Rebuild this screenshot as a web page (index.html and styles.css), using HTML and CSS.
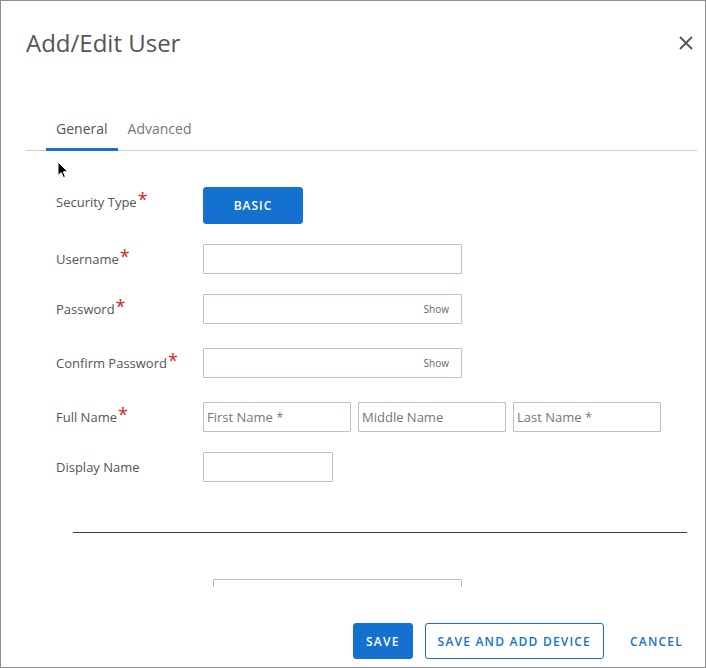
FILE: index.html
```html
<!DOCTYPE html>
<html>
<head>
<meta charset="utf-8">
<link rel="stylesheet" href="styles.css">
</head>
<body>
<div class="dialog">
  <div class="header">
    <h1 class="title">Add/Edit User</h1>
    <button class="close" aria-label="Close">
      <svg width="14" height="14" viewBox="0 0 14 14"><path d="M1 1L13 13M13 1L1 13" stroke="#555" stroke-width="1.8" fill="none"/></svg>
    </button>
  </div>
  <div class="tabs">
    <div class="tab active">General</div>
    <div class="tab">Advanced</div>
  </div>
  <div class="body">
    <div class="row row-security">
      <div class="label">Security Type<span class="req">*</span></div>
      <button class="btn btn-primary btn-basic">BASIC</button>
    </div>
    <div class="row">
      <div class="label">Username<span class="req">*</span></div>
      <input class="input w-full" type="text">
    </div>
    <div class="row">
      <div class="label">Password<span class="req">*</span></div>
      <div class="input w-full pw"><input class="bare" type="password"><span class="show">Show</span></div>
    </div>
    <div class="row row-wide">
      <div class="label">Confirm Password<span class="req">*</span></div>
      <div class="input w-full pw"><input class="bare" type="password"><span class="show">Show</span></div>
    </div>
    <div class="row row-wide">
      <div class="label">Full Name<span class="req">*</span></div>
      <div class="names">
        <input class="input w-name" type="text" placeholder="First Name *">
        <input class="input w-name" type="text" placeholder="Middle Name">
        <input class="input w-name" type="text" placeholder="Last Name *">
      </div>
    </div>
    <div class="row">
      <div class="label">Display Name</div>
      <input class="input w-short" type="text">
    </div>
    <hr class="divider">
    <input class="input w-partial" type="text">
  </div>
  <div class="footer">
    <button class="btn btn-primary">SAVE</button>
    <button class="btn btn-outline">SAVE AND ADD DEVICE</button>
    <button class="btn btn-text">CANCEL</button>
  </div>
  <svg class="cursor" width="12" height="18" viewBox="0 0 12 18"><path d="M1 1L1 14.5L4.2 11.6L6.4 16.6L8.4 15.7L6.3 10.9L10.6 10.6Z" fill="#000" stroke="#fff" stroke-width="1"/></svg>
</div>
</body>
</html>
```
FILE: styles.css
```css
* { box-sizing: border-box; }
html, body { margin: 0; padding: 0; background: #fff; }
body { font-family: "Open Sans", "Noto Sans", sans-serif; color: #555; }

.dialog {
  position: relative;
  width: 706px;
  height: 668px;
  border: 1px solid #8f8f8f;
  display: flex;
  flex-direction: column;
  overflow: hidden;
}

.header {
  display: flex;
  justify-content: space-between;
  align-items: center;
  padding: 25px 12px 0 25px;
}
.title {
  margin: 0;
  font-size: 24px;
  line-height: 33px;
  font-weight: 400;
  color: #555;
}
.close {
  border: 0;
  background: none;
  padding: 0;
  width: 14px;
  height: 14px;
  display: flex;
}

.tabs {
  display: flex;
  margin: 52px 8px 0 25px;
  padding-left: 20px;
  border-bottom: 1px solid #cfcfcf;
}
.tab {
  font-size: 14px;
  line-height: 19px;
  padding: 8px 10px 10px;
  border-bottom: 3px solid transparent;
  margin-bottom: -1px;
  color: #777;
}
.tab.active {
  color: #555;
  border-bottom-color: #1571cf;
}

.body {
  flex: 1;
  overflow: hidden;
  padding: 36px 0 0 55px;
  display: flex;
  flex-direction: column;
  gap: 20px;
}
.row {
  display: flex;
  align-items: center;
}
.row-wide { margin-top: 4px; }
.row-security { align-items: flex-start; }
.row-security .label { padding-top: 6px; }
.label {
  width: 147px;
  flex: none;
  font-size: 13px;
  line-height: 18px;
  color: #555;
}
.req {
  color: #d8231c;
  font-size: 18px;
  line-height: 10px;
  margin-left: 1px;
  position: relative;
  top: -1px;
}

.input {
  height: 30px;
  border: 1px solid #b5c1cc;
  border-radius: 1px;
  font-family: inherit;
  font-size: 13px;
  color: #555;
  padding: 0 3px;
  background: #fff;
  outline: none;
}
.input::placeholder { color: #777; }
.w-full { width: 259px; }
.w-name { width: 148px; }
.w-short { width: 130px; }
.w-partial { width: 249px; margin-left: 157px; flex: none; margin-top: 26px; }
.names { display: flex; gap: 7px; }
.pw {
  display: flex;
  align-items: center;
  padding: 0 12px 0 3px;
}
.bare {
  flex: 1;
  min-width: 0;
  border: 0;
  outline: none;
  height: 100%;
  background: transparent;
  font-family: inherit;
}
.show { font-size: 10px; color: #666; }

.divider {
  margin: 30px 0 0 17px;
  width: 614px;
  border: 0;
  border-top: 1px solid #3c3c3c;
  height: 0;
  flex: none;
}

.footer {
  height: 80px;
  flex: none;
  display: flex;
  justify-content: flex-end;
  align-items: flex-start;
  gap: 12px;
  padding: 36px 9px 0 0;
}
.btn {
  font-family: inherit;
  font-size: 12px;
  font-weight: 600;
  letter-spacing: 1.2px;
  height: 36px;
  padding: 0 12px;
  border-radius: 3px;
  border: 1px solid transparent;
  background: none;
  cursor: pointer;
}
.btn-primary { background: #1571cf; color: #fff; border-color: #1571cf; }
.btn-basic { width: 100px; height: 37px; padding: 0; letter-spacing: 1px; }
.btn-outline { border-color: #1571cf; color: #1571cf; background: #fff; }
.btn-text { color: #1571cf; padding-left: 13px; }

.cursor {
  position: absolute;
  left: 56px;
  top: 160px;
}
```
